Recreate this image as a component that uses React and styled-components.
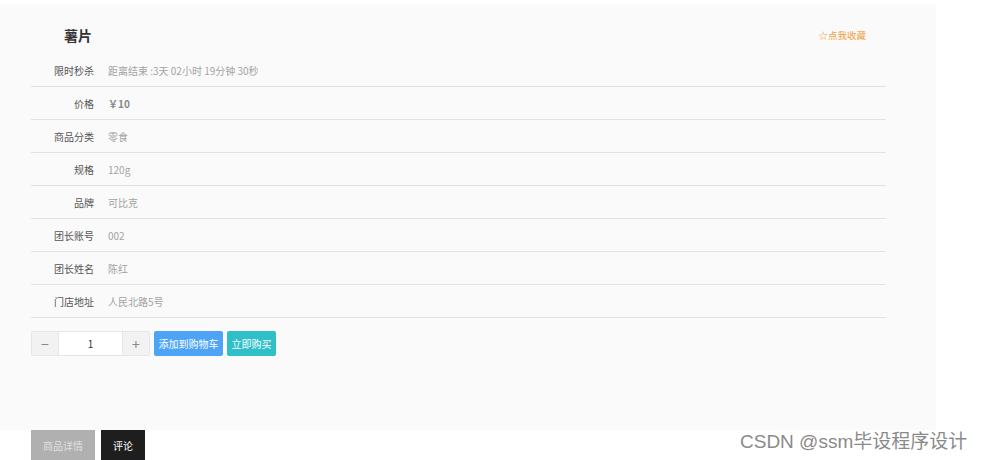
import React from "react";
import styled, { createGlobalStyle } from "styled-components";

const GlobalStyle = createGlobalStyle`
  body {
    margin: 0;
    background: #fff;
    font-family: "Noto Sans CJK SC", "Noto Sans", sans-serif;
  }
`;

const rows = [
  { label: "限时秒杀", value: "距离结束 :3天 02小时 19分钟 30秒" },
  { label: "价格", value: "￥10", strong: true },
  { label: "商品分类", value: "零食" },
  { label: "规格", value: "120g" },
  { label: "品牌", value: "可比克" },
  { label: "团长账号", value: "002" },
  { label: "团长姓名", value: "陈红" },
  { label: "门店地址", value: "人民北路5号" },
];

const Page = styled.div`
  position: relative;
  width: 982px;
  height: 460px;
  padding-top: 4px;
  box-sizing: border-box;
  overflow: hidden;
`;

const Panel = styled.div`
  width: 936px;
  height: 426px;
  background: #fafafa;
  padding: 0 50px 0 31px;
  box-sizing: border-box;
`;

const Header = styled.div`
  height: 50px;
  display: flex;
  align-items: center;
  justify-content: space-between;
  padding: 12px 20px 0 33px;
  box-sizing: border-box;
`;

const Title = styled.h2`
  margin: 0;
  font-size: 14px;
  font-weight: 700;
  color: #333;
`;

const Fav = styled.span`
  font-size: 9.5px;
  color: #f0a040;
`;

const Row = styled.div`
  height: 33px;
  display: flex;
  align-items: center;
  border-bottom: 1px solid #e2e2e2;
  box-sizing: border-box;
  font-size: 10px;
`;

const Label = styled.span`
  width: 63px;
  text-align: right;
  color: #555;
  margin-right: 14px;
`;

const Value = styled.span`
  color: ${(p) => (p.$strong ? "#888" : "#a3a3a3")};
  font-weight: ${(p) => (p.$strong ? 700 : 400)};
`;

const Actions = styled.div`
  display: flex;
  gap: 4px;
  margin-top: 13px;
  height: 25px;
`;

const Stepper = styled.div`
  display: flex;
  border: 1px solid #e6e6e6;
  border-radius: 2px;
  overflow: hidden;
  width: 119px;
  box-sizing: border-box;
`;

const StepBtn = styled.span`
  width: 26px;
  display: flex;
  align-items: center;
  justify-content: center;
  background: #f2f2f2;
  color: #888;
  font-size: 14px;
`;

const Qty = styled.span`
  flex: 1;
  display: flex;
  align-items: center;
  justify-content: center;
  background: #fff;
  border-left: 1px solid #e6e6e6;
  border-right: 1px solid #e6e6e6;
  font-size: 10px;
  color: #333;
`;

const Btn = styled.button`
  border: none;
  border-radius: 2px;
  padding: 0 4.5px;
  font-family: inherit;
  font-size: 10px;
  color: #fff;
  background: ${(p) => p.$bg};
`;

const Tabs = styled.div`
  display: flex;
  gap: 6px;
  padding-left: 31px;
`;

const Tab = styled.div`
  height: 30px;
  padding: 0 12px;
  display: flex;
  align-items: center;
  font-size: 10px;
  color: ${(p) => (p.$active ? "#fff" : "#e0e0e0")};
  background: ${(p) => (p.$active ? "#1e1e1e" : "#b0b0b0")};
`;

const Watermark = styled.div`
  position: absolute;
  left: 740px;
  top: 426px;
  font-family: "Liberation Sans", "Noto Sans CJK SC", sans-serif;
  font-size: 19px;
  color: #8a8a8a;
  white-space: nowrap;
`;

export default function App() {
  return (
    <Page>
      <GlobalStyle />
      <Panel>
        <Header>
          <Title>薯片</Title>
          <Fav>☆点我收藏</Fav>
        </Header>
        {rows.map((r) => (
          <Row key={r.label}>
            <Label>{r.label}</Label>
            <Value $strong={r.strong}>{r.value}</Value>
          </Row>
        ))}
        <Actions>
          <Stepper>
            <StepBtn>−</StepBtn>
            <Qty>1</Qty>
            <StepBtn>+</StepBtn>
          </Stepper>
          <Btn $bg="#4da3f5">添加到购物车</Btn>
          <Btn $bg="#2fbfc9">立即购买</Btn>
        </Actions>
      </Panel>
      <Tabs>
        <Tab>商品详情</Tab>
        <Tab $active>评论</Tab>
      </Tabs>
      <Watermark>CSDN @ssm毕设程序设计</Watermark>
    </Page>
  );
}
